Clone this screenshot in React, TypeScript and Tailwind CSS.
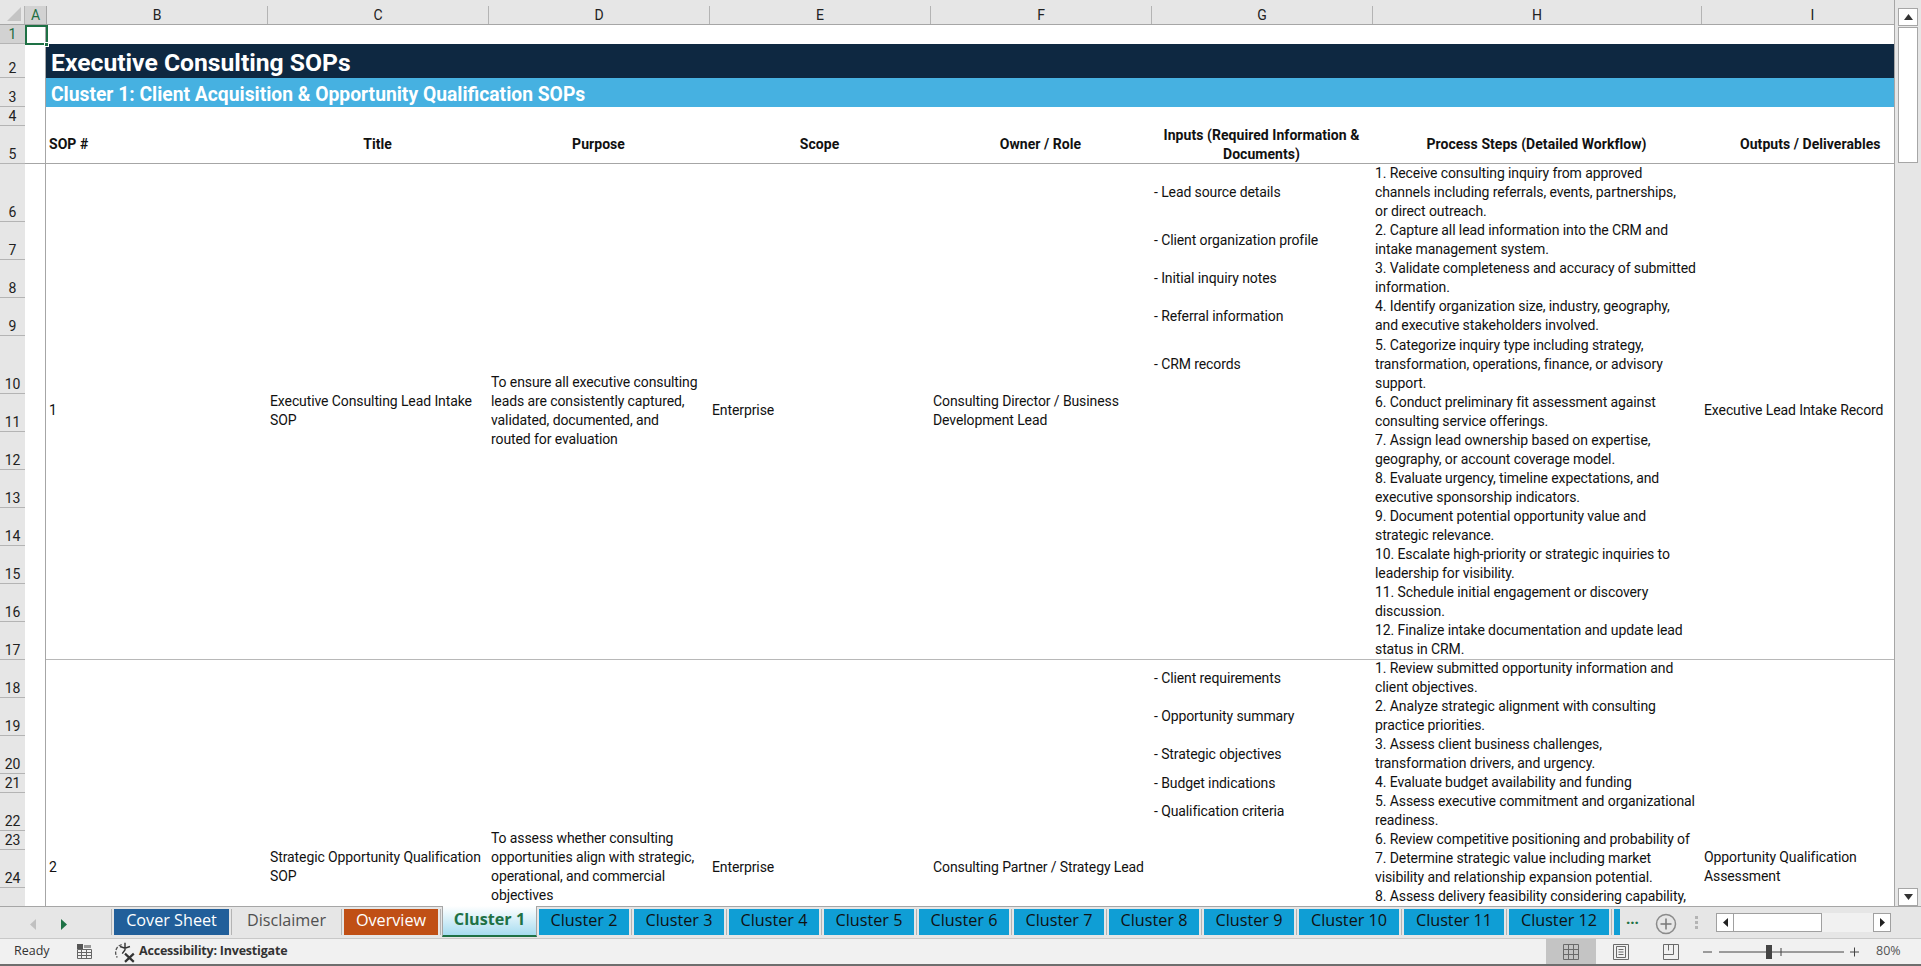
const COLUMNS = [
  { label: "B", width: 221 },
  { label: "C", width: 221 },
  { label: "D", width: 221 },
  { label: "E", width: 221 },
  { label: "F", width: 221 },
  { label: "G", width: 221 },
  { label: "H", width: 329 },
  { label: "I", width: 221 },
];

const ROW_HEIGHTS = [
  19, 34, 29, 19, 38, 58, 38, 38, 38, 58, 38, 38, 38, 38, 38, 38, 38, 38, 38,
  38, 19, 38, 19, 38,
];

interface SopRow {
  height: number;
  input?: string;
  step: string[];
}

const SOP_ONE: SopRow[] = [
  {
    height: 58,
    input: "- Lead source details",
    step: [
      "1. Receive consulting inquiry from approved",
      "channels including referrals, events, partnerships,",
      "or direct outreach.",
    ],
  },
  {
    height: 38,
    input: "- Client organization profile",
    step: ["2. Capture all lead information into the CRM and", "intake management system."],
  },
  {
    height: 38,
    input: "- Initial inquiry notes",
    step: ["3. Validate completeness and accuracy of submitted", "information."],
  },
  {
    height: 38,
    input: "- Referral information",
    step: ["4. Identify organization size, industry, geography,", "and executive stakeholders involved."],
  },
  {
    height: 58,
    input: "- CRM records",
    step: [
      "5. Categorize inquiry type including strategy,",
      "transformation, operations, finance, or advisory",
      "support.",
    ],
  },
  { height: 38, step: ["6. Conduct preliminary fit assessment against", "consulting service offerings."] },
  { height: 38, step: ["7. Assign lead ownership based on expertise,", "geography, or account coverage model."] },
  { height: 38, step: ["8. Evaluate urgency, timeline expectations, and", "executive sponsorship indicators."] },
  { height: 38, step: ["9. Document potential opportunity value and", "strategic relevance."] },
  { height: 38, step: ["10. Escalate high-priority or strategic inquiries to", "leadership for visibility."] },
  { height: 38, step: ["11. Schedule initial engagement or discovery", "discussion."] },
  { height: 38, step: ["12. Finalize intake documentation and update lead", "status in CRM."] },
];

const SOP_TWO: SopRow[] = [
  {
    height: 38,
    input: "- Client requirements",
    step: ["1. Review submitted opportunity information and", "client objectives."],
  },
  {
    height: 38,
    input: "- Opportunity summary",
    step: ["2. Analyze strategic alignment with consulting", "practice priorities."],
  },
  {
    height: 38,
    input: "- Strategic objectives",
    step: ["3. Assess client business challenges,", "transformation drivers, and urgency."],
  },
  { height: 19, input: "- Budget indications", step: ["4. Evaluate budget availability and funding"] },
  {
    height: 38,
    input: "- Qualification criteria",
    step: ["5. Assess executive commitment and organizational", "readiness."],
  },
  { height: 19, step: ["6. Review competitive positioning and probability of"] },
  {
    height: 38,
    step: ["7. Determine strategic value including market", "visibility and relationship expansion potential."],
  },
  { height: 38, step: ["8. Assess delivery feasibility considering capability,", "\u00a0"] },
];

const TABS = [
  { name: "Cover Sheet", width: 115, cls: "bg-[#215f9a] text-white" },
  { name: "Disclaimer", width: 105, cls: "text-[#505050]" },
  { name: "Overview", width: 94, cls: "bg-[#c04f15] text-white" },
];

const CLUSTER_TABS = [
  { name: "Cluster 2", width: 90 },
  { name: "Cluster 3", width: 90 },
  { name: "Cluster 4", width: 90 },
  { name: "Cluster 5", width: 90 },
  { name: "Cluster 6", width: 90 },
  { name: "Cluster 7", width: 90 },
  { name: "Cluster 8", width: 90 },
  { name: "Cluster 9", width: 90 },
  { name: "Cluster 10", width: 100 },
  { name: "Cluster 11", width: 100 },
  { name: "Cluster 12", width: 100 },
  { name: "", width: 6 },
];

const Lines = ({ lines }: { lines: string[] }) => (
  <div className="whitespace-nowrap pb-[2px]">
    {lines.map((line) => (
      <div key={line} className="h-[19px] leading-[19px]">
        {line}
      </div>
    ))}
  </div>
);

const ColumnHeaders = () => (
  <div className="flex h-[25px] pt-[6px] overflow-hidden border-b border-[#a6a6a6] bg-[#e6e6e6] text-[14px] text-[#222]">
    <div className="w-[25px] shrink-0 relative border-r border-[#b4b4b4]">
      <svg className="absolute right-[3px] bottom-[3px]" width="14" height="14" viewBox="0 0 14 14">
        <path d="M14 0V14H0Z" fill="#c4c4c4" />
      </svg>
    </div>
    <div className="w-[22px] shrink-0 bg-[#d2d2d2] border-r border-[#a6a6a6] text-center text-[#1e6e42] leading-[18px]">
      A
    </div>
    {COLUMNS.map((col) => (
      <div
        key={col.label}
        style={{ width: col.width }}
        className="shrink-0 border-r border-[#b4b4b4] last:border-r-0 text-center leading-[18px]"
      >
        {col.label}
      </div>
    ))}
  </div>
);

const RowHeaders = () => (
  <div className="w-[25px] shrink-0 bg-[#e6e6e6] overflow-hidden text-[14px] text-[#222]">
    {ROW_HEIGHTS.map((height, i) => (
      <div
        key={i}
        style={{ height }}
        className={`flex items-end justify-center border-b border-[#b4b4b4] leading-[18px] ${
          i === 0 ? "bg-[#d2d2d2] text-[#1e6e42]" : ""
        }`}
      >
        {i + 1}
      </div>
    ))}
  </div>
);

const SopBlock = ({
  number,
  title,
  purpose,
  owner,
  output,
  rows,
  height,
}: {
  number: string;
  title: string[];
  purpose: string[];
  owner: string[];
  output: string[];
  rows: SopRow[];
  height: number;
}) => {
  const Cell = ({ width, lines }: { width: number; lines: string[] }) => (
    <div style={{ width }} className="shrink-0 flex items-center pl-[3px]">
      <Lines lines={lines} />
    </div>
  );

  return (
    <div style={{ height }} className="flex shrink-0 border-b border-[#b8b8b8]">
      <Cell width={221} lines={[number]} />
      <Cell width={221} lines={title} />
      <Cell width={221} lines={purpose} />
      <Cell width={221} lines={["Enterprise"]} />
      <Cell width={221} lines={owner} />
      <div className="w-[221px] shrink-0 flex flex-col">
        {rows.map((row) => (
          <div
            key={row.step[0]}
            style={{ height: row.height }}
            className="shrink-0 flex items-center pl-[3px] pb-[1px]"
          >
            {row.input}
          </div>
        ))}
      </div>
      <div className="w-[329px] shrink-0 flex flex-col">
        {rows.map((row) => (
          <div key={row.step[0]} style={{ height: row.height }} className="shrink-0 flex items-center pl-[3px]">
            <Lines lines={row.step} />
          </div>
        ))}
      </div>
      <Cell width={192} lines={output} />
    </div>
  );
};

const Sheet = () => (
  <div className="relative flex-1 flex overflow-hidden bg-white">
    {/* column A with the frozen pane line */}
    <div className="w-[21px] shrink-0 border-r border-[#a6a6a6]">
      <div className="h-[139px] border-b border-[#a6a6a6]" />
    </div>
    <div className="flex-1 flex flex-col text-[14px] text-[#111] font-['Roboto',sans-serif] tracking-[-0.1px]">
      <div className="h-[19px] shrink-0" />
      <div className="h-[34px] shrink-0 bg-[#0e2841] text-white text-[24.7px] font-bold pl-[5px] leading-[37px] tracking-normal">
        Executive Consulting SOPs
      </div>
      <div className="h-[29px] shrink-0 bg-[#46b1e1] text-white text-[19.3px] font-bold pl-[5px] leading-[33px] tracking-normal">
        Cluster 1: Client Acquisition &amp; Opportunity Qualification SOPs
      </div>
      <div className="h-[19px] shrink-0" />
      <div className="h-[38px] shrink-0 flex items-center font-bold border-b border-[#a6a6a6] tracking-[0.05px] overflow-hidden">
        <div className="w-[221px] shrink-0 pl-[3px]">SOP #</div>
        <div className="w-[221px] shrink-0 text-center">Title</div>
        <div className="w-[221px] shrink-0 text-center">Purpose</div>
        <div className="w-[221px] shrink-0 text-center">Scope</div>
        <div className="w-[221px] shrink-0 text-center">Owner / Role</div>
        <div className="w-[221px] shrink-0 text-center leading-[19px] whitespace-nowrap">
          Inputs (Required Information &amp;
          <br />
          Documents)
        </div>
        <div className="w-[329px] shrink-0 text-center">Process Steps (Detailed Workflow)</div>
        <div className="w-[192px] shrink-0 pl-[39px] whitespace-nowrap">Outputs / Deliverables</div>
      </div>
      <SopBlock
        number="1"
        title={["Executive Consulting Lead Intake", "SOP"]}
        purpose={[
          "To ensure all executive consulting",
          "leads are consistently captured,",
          "validated, documented, and",
          "routed for evaluation",
        ]}
        owner={["Consulting Director / Business", "Development Lead"]}
        output={["Executive Lead Intake Record"]}
        rows={SOP_ONE}
        height={496}
      />
      <SopBlock
        number="2"
        title={["Strategic Opportunity Qualification", "SOP"]}
        purpose={[
          "To assess whether consulting",
          "opportunities align with strategic,",
          "operational, and commercial",
          "objectives",
        ]}
        owner={["Consulting Partner / Strategy Lead"]}
        output={["Opportunity Qualification", "Assessment"]}
        rows={SOP_TWO}
        height={417}
      />
    </div>
    {/* selected cell A1 */}
    <div className="absolute left-0 top-0 w-[23px] h-[20px] border-2 border-[#1e7145]" />
    <div className="absolute left-[19px] top-[17px] w-[5px] h-[5px] bg-[#1e7145] border border-white" />
  </div>
);

const VerticalScrollbar = () => (
  <div className="w-[27px] shrink-0 bg-[#e6e6e6] border-l border-[#a6a6a6] flex flex-col items-center pt-[8px]">
    <div className="w-[20px] h-[18px] bg-white border border-[#a6a6a6] flex items-center justify-center">
      <svg width="9" height="6" viewBox="0 0 9 6">
        <path d="M4.5 0 9 6H0Z" fill="#333" />
      </svg>
    </div>
    <div className="w-[20px] h-[136px] mt-[1px] bg-white border border-[#a6a6a6]" />
    <div className="flex-1" />
    <div className="w-[20px] h-[18px] bg-white border border-[#a6a6a6] flex items-center justify-center">
      <svg width="9" height="6" viewBox="0 0 9 6">
        <path d="M0 0H9L4.5 6Z" fill="#333" />
      </svg>
    </div>
  </div>
);

const TabSep = () => <div className="w-px h-[26px] mx-[2px] bg-[#b4b4b4] shrink-0" />;

const TabBar = () => (
  <div className="h-[33px] shrink-0 flex bg-[#e6e6e6] border-t border-b border-[#a6a6a6] border-b-[#c8c8c8] font-['Open_Sans',sans-serif] text-[16.2px] relative">
    <div className="w-[109px] shrink-0 relative flex items-center">
      <svg className="absolute left-[30px] top-[12px]" width="6" height="11" viewBox="0 0 6 11">
        <path d="M6 0V11L0 5.5Z" fill="#c0c0c0" />
      </svg>
      <svg className="absolute left-[61px] top-[12px]" width="6" height="11" viewBox="0 0 6 11">
        <path d="M0 0V11L6 5.5Z" fill="#1e7145" />
      </svg>
    </div>
    <div className="flex items-start pt-[2px] h-full">
      <TabSep />
      {TABS.map((tab) => (
        <div key={tab.name} className="flex">
          <div
            style={{ width: tab.width }}
            className={`h-[26px] pb-[4px] flex items-center justify-center shrink-0 ${tab.cls}`}
          >
            {tab.name}
          </div>
          <TabSep />
        </div>
      ))}
      <div className="w-[95px] h-[31px] mt-[-3px] ml-[-1px] mr-[2px] shrink-0 flex items-center justify-center font-bold text-[#1e7145] bg-gradient-to-b from-white to-[#a6dcf0] border-x border-[#a6a6a6] border-b-2 border-b-[#1e7145] pb-[2px]">
        Cluster 1
      </div>
      {CLUSTER_TABS.map((tab) => (
        <div key={tab.name} className="flex">
          <div
            style={{ width: tab.width }}
            className="h-[26px] pb-[4px] flex items-center justify-center bg-[#0f9ed5] text-[#111] shrink-0"
          >
            {tab.name}
          </div>
          {tab.name && <TabSep />}
        </div>
      ))}
    </div>
    <div className="absolute left-[1626px] top-[2px] text-[#1e7145] text-[15px] leading-[18px] font-bold">...</div>
    <svg className="absolute left-[1655px] top-[6px]" width="22" height="22" viewBox="0 0 22 22">
      <circle cx="11" cy="11" r="9.5" fill="none" stroke="#8a8a8a" strokeWidth="1.5" />
      <path d="M11 5.5v11M5.5 11h11" stroke="#777" strokeWidth="1.5" />
    </svg>
    <div className="absolute left-[1695px] top-[9px] flex flex-col gap-[2px]">
      <div className="w-[3px] h-[3px] bg-[#b4b4b4]" />
      <div className="w-[3px] h-[3px] bg-[#b4b4b4]" />
      <div className="w-[3px] h-[3px] bg-[#b4b4b4]" />
    </div>
    <div className="absolute left-[1716px] top-[6px] w-[175px] h-[19px] flex bg-[#f1f1f1]">
      <div className="w-[18px] bg-white border border-[#a0a0a0] flex items-center justify-center">
        <svg width="5" height="9" viewBox="0 0 5 9">
          <path d="M5 0V9L0 4.5Z" fill="#222" />
        </svg>
      </div>
      <div className="w-[88px] bg-white border border-l-0 border-[#a0a0a0]" />
      <div className="flex-1" />
      <div className="w-[18px] bg-white border border-[#a0a0a0] flex items-center justify-center">
        <svg width="5" height="9" viewBox="0 0 5 9">
          <path d="M0 0V9L5 4.5Z" fill="#222" />
        </svg>
      </div>
    </div>
  </div>
);

const StatusBar = () => (
  <div className="h-[27px] shrink-0 flex items-center bg-[#f1f1f1] border-b-2 border-[#6e6e6e] text-[12.5px] text-[#333] font-['Open_Sans',sans-serif] relative">
    <span className="ml-[14px] w-[63px]">Ready</span>
    <svg width="15" height="15" viewBox="0 0 15 15">
      <rect x="0" y="0" width="6" height="5" fill="#555" />
      <path d="M7 1h7v3H7z" fill="#999" />
      <path d="M.5 5.5h14v9H.5zM.5 8.5h14M.5 11.5h14M4.5 5.5v9M9.5 5.5v9" fill="none" stroke="#666" strokeWidth="1" />
    </svg>
    <svg className="ml-[22px]" width="22" height="22" viewBox="0 0 20 20">
      <path d="M7 3.2A7.5 7.5 0 0 0 3 15" fill="none" stroke="#555" strokeWidth="1.2" strokeDasharray="3 1.4" />
      <path d="M10 1.5v7M5.5 5l4.5 1.5L14.5 5M10 8l-2.5 3.5" fill="none" stroke="#333" strokeWidth="1.3" />
      <path d="M10 11.5l8 7.5M18 11.5l-8 7.5" stroke="#333" strokeWidth="2" />
    </svg>
    <span className="ml-[3px] font-bold text-[12.5px] tracking-[-0.2px]">Accessibility: Investigate</span>
    <div className="absolute left-[1546px] top-0 w-[50px] h-full bg-[#c4c4c4] flex items-center justify-center">
      <svg width="16" height="16" viewBox="0 0 16 16">
        <path d="M.5.5h15v15H.5zM.5 5.5h15M.5 10.5h15M5.5.5v15M10.5.5v15" fill="none" stroke="#6a6a6a" />
      </svg>
    </div>
    <svg className="absolute left-[1613px] top-[5px]" width="16" height="16" viewBox="0 0 16 16">
      <path d="M.5.5h15v15H.5z M3.5 2.5h9v11h-9z M5.5 5.5h5M5.5 8h5M5.5 10.5h5" fill="none" stroke="#6a6a6a" />
    </svg>
    <svg className="absolute left-[1663px] top-[5px]" width="16" height="16" viewBox="0 0 16 16">
      <path d="M.5.5h15v15H.5z M.5 10.5h10V.5 M5.5.5v6" fill="none" stroke="#6a6a6a" />
    </svg>
    <svg className="absolute left-[1703px] top-[6px]" width="156" height="14" viewBox="0 0 156 14">
      <path d="M0 7h9M16 7h125M78 3v8M147 7h9M151.5 2.5v9" stroke="#444" strokeWidth="1" fill="none" />
      <rect x="63" y="0" width="6" height="14" fill="#444" />
    </svg>
    <span className="absolute left-[1876px] text-[#555]">80%</span>
  </div>
);

const App = () => {
  return (
    <div className="w-[1921px] h-[966px] flex flex-col overflow-hidden bg-[#e6e6e6] font-['Roboto',sans-serif]">
      <div className="flex h-[906px] shrink-0">
        <div className="w-[1894px] shrink-0 flex flex-col">
          <ColumnHeaders />
          <div className="flex-1 flex overflow-hidden">
            <RowHeaders />
            <Sheet />
          </div>
        </div>
        <VerticalScrollbar />
      </div>
      <TabBar />
      <StatusBar />
    </div>
  );
};

export default App;
